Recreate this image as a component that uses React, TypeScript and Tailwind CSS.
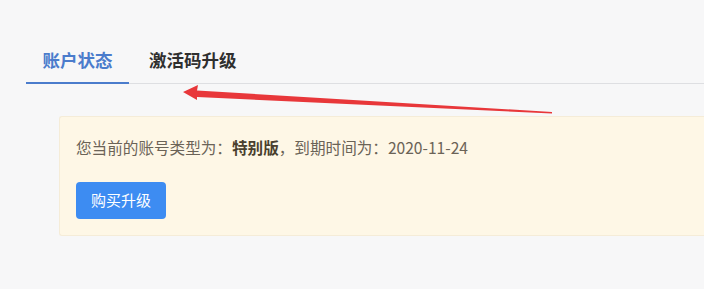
import React from "react";

const tabs = ["账户状态", "激活码升级"];

function Arrow() {
  return (
    <svg
      className="pointer-events-none absolute left-0 top-0"
      width={704}
      height={289}
      viewBox="0 0 704 289"
    >
      <polygon
        points="183,92 198,85 197,90.5 552,112 552,113.5 197,97 197,100"
        fill="#e8373a"
      />
    </svg>
  );
}

export default function App() {
  const active = 0;
  return (
    <div
      className="relative h-[289px] w-[704px] overflow-hidden bg-[#f7f7f8]"
      style={{ fontFamily: '"Noto Sans CJK SC", "Liberation Sans", sans-serif' }}
    >
      <div className="ml-[26px] mt-[44px] flex border-b border-[#dedfe2]">
        {tabs.map((t, i) => (
          <div
            key={t}
            className={
              i === active
                ? "-mb-px flex h-[40px] w-[103px] items-start justify-center border-b-2 border-[#4b7ccc] text-[17.5px] leading-[32px] font-bold text-[#4b7ccc]"
                : "-mb-px flex h-[40px] items-start px-5 text-[17.5px] leading-[32px] font-bold text-[#2f2f2f]"
            }
          >
            {t}
          </div>
        ))}
      </div>

      <div className="ml-[59px] mt-[32px] h-[120px] rounded-l-[3px] border border-r-0 border-[#f5ecd8] bg-[#fef7e6] pl-[16px] pt-[18px]">
        <p className="text-[15.6px] leading-[24px] text-[#6b6357]">
          您当前的账号类型为：
          <span className="font-bold text-[#4a3f2e]">特别版</span>
          ，到期时间为：2020-11-24
        </p>
        <button className="mt-[23px] flex h-[37px] w-[90px] items-center justify-center rounded-[4px] bg-[#3d8cf2] text-[15px] text-white">
          购买升级
        </button>
      </div>

      <Arrow />
    </div>
  );
}
